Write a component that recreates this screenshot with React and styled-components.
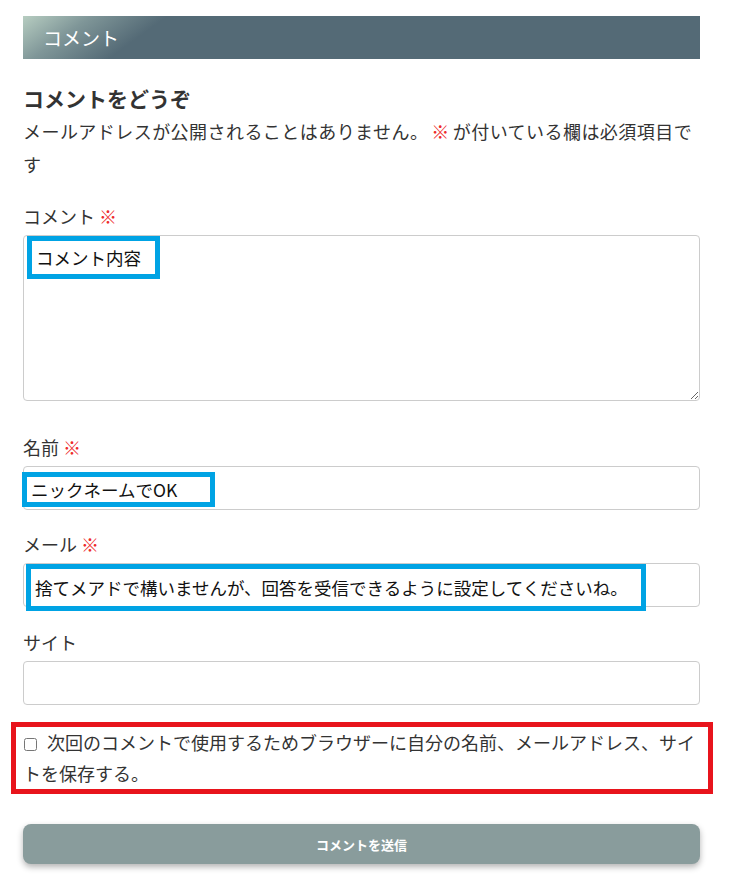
import React from 'react';
import styled, { createGlobalStyle } from 'styled-components';

const Global = createGlobalStyle`
  html, body { margin: 0; padding: 0; background: #fff; }
  body {
    font-family: "Noto Sans CJK JP", "Noto Sans", sans-serif;
    color: #333;
  }
  * { box-sizing: border-box; }
`;

const Page = styled.div`
  width: 730px;
  padding: 16px 30px 30px 23px;
`;

const SectionHeader = styled.h2`
  margin: 0;
  height: 43px;
  padding-left: 20px;
  font-size: 19px;
  font-weight: 400;
  line-height: 43px;
  color: #fff;
  background: linear-gradient(144deg, #b7cdc1 0px, #7f9698 40px, #546a76 85px, #546a76 100%);
`;

const Title = styled.h3`
  margin: 24px 0 0;
  font-size: 21px;
  font-weight: 700;
  line-height: 30px;
  color: #333;
`;

const Notes = styled.p`
  margin: 2px 0 0;
  font-size: 18px;
  line-height: 33px;
  letter-spacing: 0.45px;
  color: #333;
`;

const Req = styled.span`
  color: #ee2a2a;
  margin: 0 ${p => (p.$spaced ? '3px' : '0')};
`;

const Field = styled.div`
  margin-top: ${p => p.$mt}px;
`;

const Label = styled.label`
  display: block;
  font-size: 18px;
  line-height: 30px;
  margin-bottom: 4px;
  color: #333;
`;

const Control = styled.div`
  position: relative;
`;

const TextArea = styled.textarea`
  display: block;
  width: 100%;
  height: 166px;
  border: 1px solid #ccc;
  border-radius: 4px;
  padding: 8px;
  font-family: inherit;
  font-size: 18px;
  background: #fff;
  resize: vertical;
  outline: none;
`;

const Input = styled.input`
  display: block;
  width: 100%;
  height: 44px;
  border: 1px solid #ccc;
  border-radius: 4px;
  padding: 0 10px;
  font-family: inherit;
  font-size: 18px;
  background: #fff;
  outline: none;
`;

const Note = styled.div`
  position: absolute;
  left: ${p => p.$x}px;
  top: ${p => p.$y}px;
  width: ${p => p.$w}px;
  height: ${p => p.$h}px;
  border: 5px solid #00a3e4;
  background: #fff;
  padding-left: 4px;
  font-size: 17.5px;
  line-height: ${p => p.$h - 10}px;
  color: #111;
  white-space: nowrap;
  pointer-events: none;
`;

const Consent = styled.p`
  margin: 17px -13px 0 -12px;
  border: 5px solid #e8141c;
  padding: 0 6px 0 7px;
  font-size: 18px;
  line-height: 31px;
  color: #333;
`;

const Check = styled.input`
  width: 13px;
  height: 13px;
  margin: 0 10px 0 1px;
  vertical-align: -1px;
`;

const Submit = styled.button`
  display: block;
  width: 100%;
  height: 40px;
  margin-top: 30px;
  border: none;
  border-radius: 8px;
  background: #899c9c;
  color: #fff;
  font-family: inherit;
  font-size: 13px;
  font-weight: 700;
  box-shadow: 0 3px 6px rgba(0, 0, 0, 0.3);
  cursor: pointer;
`;

export default function App() {
  return (
    <Page>
      <Global />
      <SectionHeader>コメント</SectionHeader>
      <Title>コメントをどうぞ</Title>
      <Notes>
        メールアドレスが公開されることはありません。<Req $spaced>※</Req>が付いている欄は必須項目です
      </Notes>

      <Field $mt={20}>
        <Label>コメント <Req>※</Req></Label>
        <Control>
          <TextArea />
          <Note $x={4} $y={1} $w={133} $h={43}>コメント内容</Note>
        </Control>
      </Field>

      <Field $mt={31}>
        <Label>名前 <Req>※</Req></Label>
        <Control>
          <Input type="text" />
          <Note $x={-1} $y={6} $w={193} $h={35}>ニックネームでOK</Note>
        </Control>
      </Field>

      <Field $mt={19}>
        <Label>メール <Req>※</Req></Label>
        <Control>
          <Input type="email" />
          <Note $x={3} $y={1} $w={620} $h={47}>
            捨てメアドで構いませんが、回答を受信できるように設定してくださいね。
          </Note>
        </Control>
      </Field>

      <Field $mt={20}>
        <Label>サイト</Label>
        <Control>
          <Input type="url" />
        </Control>
      </Field>

      <Consent>
        <Check type="checkbox" />
        次回のコメントで使用するためブラウザーに自分の名前、メールアドレス、サイトを保存する。
      </Consent>

      <Submit type="button">コメントを送信</Submit>
    </Page>
  );
}
